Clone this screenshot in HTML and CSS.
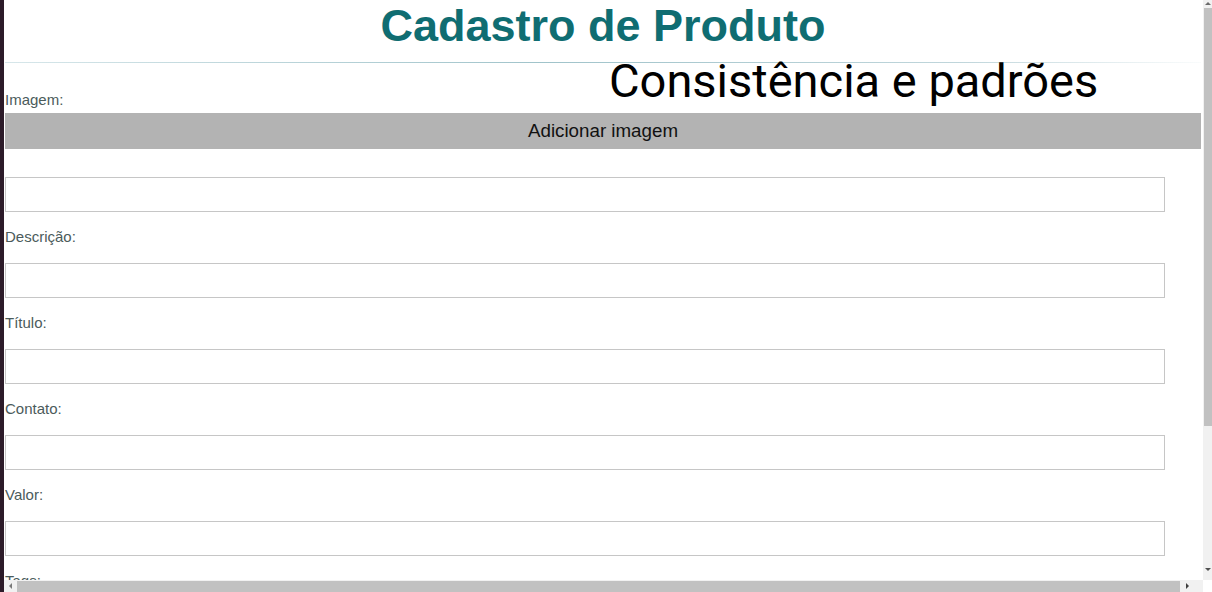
FILE: index.html
```html
<!DOCTYPE html>
<html lang="pt-BR">
<head>
<meta charset="utf-8">
<title>Cadastro de Produto</title>
<link rel="stylesheet" href="styles.css">
</head>
<body>
<div class="frame">
  <div class="edge"></div>
  <div class="viewport">
    <div class="row">
      <main class="page">
        <header class="header">
          <h1 class="title">Cadastro de Produto</h1>
        </header>
        <form class="form">
          <label class="label label-first">Imagem:</label>
          <button type="button" class="add-btn">Adicionar imagem</button>
          <input class="field" type="text">
          <label class="label">Descrição:</label>
          <input class="field" type="text">
          <label class="label">Título:</label>
          <input class="field" type="text">
          <label class="label">Contato:</label>
          <input class="field" type="text">
          <label class="label">Valor:</label>
          <input class="field" type="text">
          <label class="label">Tags:</label>
          <input class="field" type="text">
        </form>
      </main>
      <div class="vscroll">
        <span class="arrow arrow-up"></span>
        <span class="vthumb"></span>
        <span class="vspace"></span>
        <span class="arrow arrow-down"></span>
      </div>
    </div>
    <div class="hscroll">
      <span class="arrow arrow-left"></span>
      <span class="hthumb"></span>
      <span class="arrow arrow-right"></span>
      <span class="corner"></span>
    </div>
  </div>
</div>
<div class="overlay">Consistência e padrões</div>
</body>
</html>
```

FILE: styles.css
```css
* { box-sizing: border-box; }

html, body {
  margin: 0;
  padding: 0;
  width: 1212px;
  height: 592px;
  overflow: hidden;
  background: #ffffff;
  font-family: "Liberation Sans", Arial, sans-serif;
}

.frame {
  display: flex;
  width: 1212px;
  height: 592px;
}

.edge {
  width: 4px;
  flex: none;
  background: #2c1b29;
}

.viewport {
  flex: 1;
  display: flex;
  flex-direction: column;
  min-width: 0;
}

.row {
  flex: 1;
  display: flex;
  min-height: 0;
}

.page {
  flex: 1;
  min-width: 0;
  overflow: hidden;
  padding: 0 2px 0 1px;
  background: #ffffff;
}

.header {
  height: 63px;
  background:
    linear-gradient(to right, rgba(140,185,195,0.35), rgba(120,170,180,0.7) 45%, rgba(140,180,190,0.55) 80%, rgba(200,220,225,0.1)) bottom / 100% 1px no-repeat,
    #ffffff;
  text-align: center;
}

.title {
  margin: 0;
  font-family: "Liberation Sans", Arial, sans-serif;
  font-weight: bold;
  font-size: 45px;
  line-height: 51px;
  color: #0f6d72;
}

.form {
  display: flex;
  flex-direction: column;
  align-items: flex-start;
}

.label {
  display: block;
  font-size: 15px;
  line-height: 17px;
  color: #4b5b5b;
  margin: 16px 0 18px;
}

.label-first {
  margin: 28px 0 5px;
}

.add-btn {
  width: 100%;
  height: 36px;
  margin: 0 0 28px;
  border: none;
  background: #b3b3b3;
  font-family: "Liberation Sans", Arial, sans-serif;
  font-size: 18.75px;
  color: #111111;
  padding: 0;
}

.field {
  width: 97%;
  height: 35px;
  margin: 0;
  border: 1px solid #c6c6c6;
  background: #ffffff;
  flex: none;
}

.vscroll {
  width: 9px;
  flex: none;
  display: flex;
  flex-direction: column;
  align-items: center;
  background: #f1f1f1;
}

.vthumb {
  width: 8px;
  height: 418px;
  margin-top: 3px;
  background: #c1c1c1;
}

.vspace { flex: 1; }

.hscroll {
  height: 12px;
  flex: none;
  display: flex;
  align-items: center;
  background: #f1f1f1;
  padding-left: 5px;
}

.hthumb {
  width: 1163px;
  height: 11px;
  margin: 1px 6px 0 5px;
  background: #c1c1c1;
}

.corner {
  width: 9px;
  height: 12px;
  margin-left: auto;
  background: #ffffff;
}

.arrow {
  width: 0;
  height: 0;
  flex: none;
}

.arrow-up {
  margin-top: 2px;
  border-left: 3px solid transparent;
  border-right: 3px solid transparent;
  border-bottom: 3px solid #6a6a6a;
}

.arrow-down {
  margin-bottom: 9px;
  border-left: 3px solid transparent;
  border-right: 3px solid transparent;
  border-top: 3px solid #505050;
}

.arrow-left {
  border-top: 3px solid transparent;
  border-bottom: 3px solid transparent;
  border-right: 3px solid #7a7a7a;
}

.arrow-right {
  border-top: 3px solid transparent;
  border-bottom: 3px solid transparent;
  border-left: 3px solid #404040;
}

.overlay {
  position: absolute;
  left: 609px;
  top: 53px;
  font-family: Roboto, "Noto Sans", sans-serif;
  font-size: 47px;
  line-height: 56px;
  color: #000000;
  white-space: nowrap;
}
```
